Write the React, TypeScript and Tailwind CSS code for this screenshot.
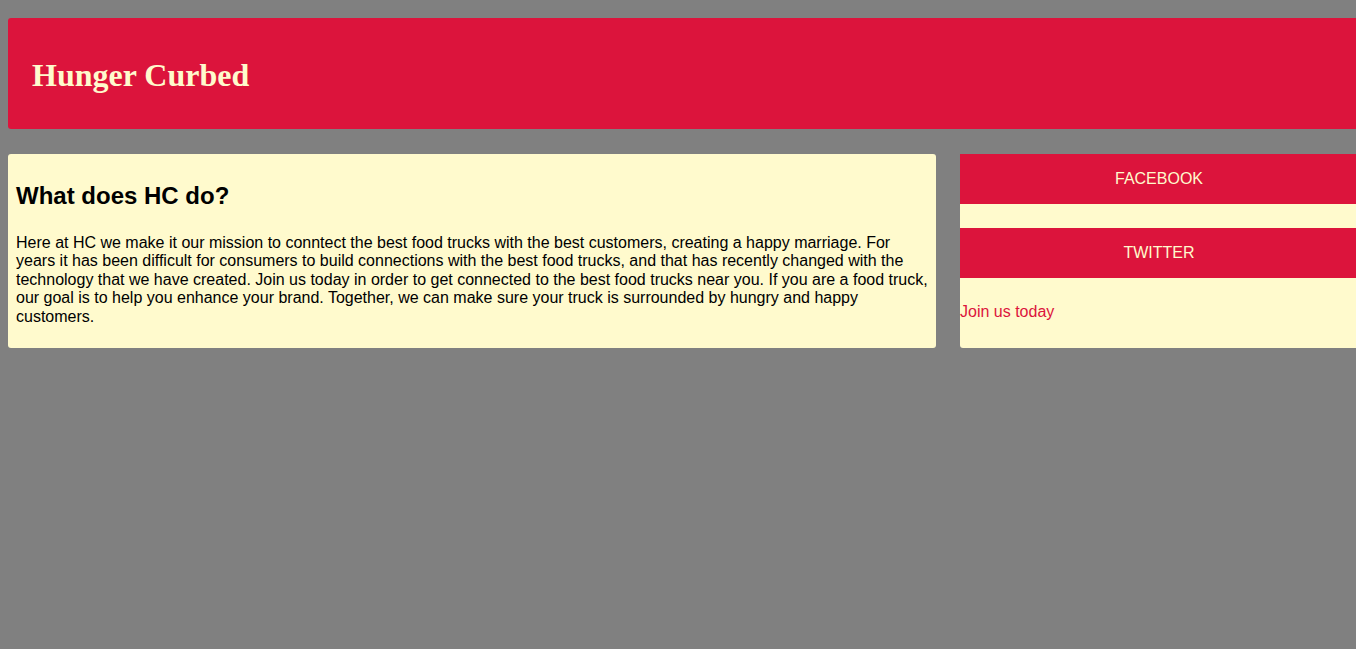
export default function App() {
  return (
    <div className="min-h-screen w-full overflow-hidden bg-[#808080] pt-[18px]" style={{ fontFamily: "'Liberation Sans', Arial, sans-serif" }}>
      {/* Header */}
      <header className="ml-2 w-[1360px] rounded-[3px] bg-[#dc143c] px-6 py-4">
        <h1 className="mt-[23px] mb-[19px] text-[32px] font-bold leading-[37px] text-[#fffacd]" style={{ fontFamily: "'Liberation Serif', 'Times New Roman', serif" }}>
          Hunger Curbed
        </h1>
      </header>

      {/* Content */}
      <div className="mt-[25px] ml-2 flex gap-6">
        <main className="w-[928px] shrink-0 rounded-[3px] bg-[#fffacd] p-2 text-black">
          <h2 className="mt-5 text-[24px] font-bold leading-[28px]">What does HC do?</h2>
          <p className="mt-6 mb-[14px] text-[16px] leading-[18.4px]">
            Here at HC we make it our mission to conntect the best food trucks with the best customers, creating a happy marriage. For years it has been difficult for consumers to build connections with the best food trucks, and that has recently changed with the technology that we have created. Join us today in order to get connected to the best food trucks near you. If you are a food truck, our goal is to help you enhance your brand. Together, we can make sure your truck is surrounded by hungry and happy customers.
          </p>
        </main>

        <aside className="w-[398px] shrink-0 rounded-[3px] bg-[#fffacd]">
          <div className="flex h-[50px] items-center justify-center bg-[#dc143c] text-[16px] text-[#fffacd]">FACEBOOK</div>
          <div className="mt-6 flex h-[50px] items-center justify-center bg-[#dc143c] text-[16px] text-[#fffacd]">TWITTER</div>
          <p className="mt-[25px] text-[16px] leading-[18.4px] text-[#dc143c]">Join us today</p>
        </aside>
      </div>
    </div>
  )
}
